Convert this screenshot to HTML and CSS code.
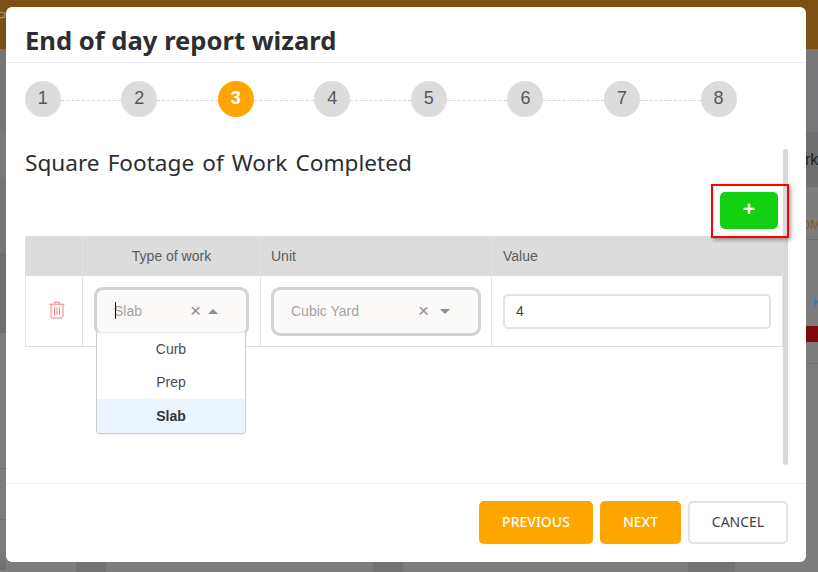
FILE: index.html
```html
<!DOCTYPE html>
<html lang="en">
<head>
<meta charset="utf-8">
<title>End of day report wizard</title>
<link rel="stylesheet" href="styles.css">
</head>
<body>
<div class="backdrop">
  <div class="bg-top"><span class="bg-p">P</span></div>
  <div class="bg-main">
    <div class="strip">
      <div class="band h84 tone-a"></div>
      <div class="band h45 tone-b"></div>
      <div class="band h75 tone-a"></div>
      <div class="band h80 tone-c"></div>
      <div class="band h136 tone-d line"></div>
      <div class="band h51 tone-d line"></div>
      <div class="band h52 tone-e"></div>
    </div>
    <div class="strip wide">
      <div class="band h83 tone-a"></div>
      <div class="band h55 tone-c rk-band"><span class="bg-rk">rk</span></div>
      <div class="band h53 tone-d line om-band"><span class="bg-om">OM</span></div>
      <div class="band h86 tone-d k-band"><span class="bg-k">K</span></div>
      <div class="band h16 tone-red"></div>
      <div class="band h22 tone-d line"></div>
      <div class="band h208 tone-d"></div>
    </div>
  </div>
  <div class="bg-foot bg-foot-a"></div>
  <div class="bg-foot bg-foot-b"></div>
  <div class="bg-foot bg-foot-c"></div>
</div>
<main class="modal">
  <header class="modal-head"><h1 class="modal-title">End of day report wizard</h1></header>
  <ol class="steps">
    <li class="step">1</li><li class="link"></li>
    <li class="step">2</li><li class="link"></li>
    <li class="step active">3</li><li class="link"></li>
    <li class="step">4</li><li class="link"></li>
    <li class="step">5</li><li class="link"></li>
    <li class="step">6</li><li class="link"></li>
    <li class="step">7</li><li class="link"></li>
    <li class="step">8</li>
  </ol>
  <section class="body">
    <div class="scrollbar"></div>
    <h2 class="section-title">Square Footage of Work Completed</h2>
    <div class="add-row">
      <div class="add-outline"><button class="add-btn" type="button">+</button></div>
    </div>
    <div class="table">
      <div class="row head">
        <div class="cell c-del"></div>
        <div class="cell c-type center">Type of work</div>
        <div class="cell c-unit">Unit</div>
        <div class="cell c-val">Value</div>
      </div>
      <div class="row data">
        <div class="cell c-del center">
          <svg class="trash" width="16" height="18" viewBox="0 0 16 18" fill="none" stroke="#fb7f85" stroke-width="1">
            <path d="M5.5 3V1.2h5V3"/>
            <path d="M.5 3.2h15"/>
            <path d="M2 3.2V15.5a1.5 1.5 0 0 0 1.5 1.5h9a1.5 1.5 0 0 0 1.5-1.5V3.2"/>
            <path d="M5.5 6.5v7.5M8 6.5v7.5M10.5 6.5v7.5"/>
          </svg>
        </div>
        <div class="cell c-type">
          <div class="select-wrap">
            <div class="select open">
              <span class="select-value"><span class="caret"></span>Slab</span>
              <span class="clear">×</span>
              <span class="arrow up"></span>
            </div>
            <ul class="menu">
              <li class="opt">Curb</li>
              <li class="opt">Prep</li>
              <li class="opt chosen">Slab</li>
            </ul>
          </div>
        </div>
        <div class="cell c-unit">
          <div class="select">
            <span class="select-value">Cubic Yard</span>
            <span class="clear">×</span>
            <span class="arrow down"></span>
          </div>
        </div>
        <div class="cell c-val"><div class="value-box">4</div></div>
      </div>
    </div>
  </section>
  <footer class="modal-foot">
    <button class="btn primary prev" type="button">PREVIOUS</button>
    <button class="btn primary next" type="button">NEXT</button>
    <button class="btn ghost" type="button">CANCEL</button>
  </footer>
</main>
</body>
</html>
```
FILE: styles.css
```css
* { box-sizing: border-box; }
html, body { margin: 0; padding: 0; }
body {
  width: 818px; height: 572px; overflow: hidden; position: relative;
  background: #7d7d7d; font-family: "Liberation Sans", Arial, sans-serif;
}
.backdrop { position: absolute; inset: 0; overflow: hidden; display: flex; flex-direction: column; }
.bg-top { position: relative; flex: none; height: 49px; background: #7c5012; color: #a6916f; font-size: 14px; overflow: hidden; }
.bg-p { position: absolute; left: -3px; top: 9px; }
.bg-main { flex: 1; display: flex; justify-content: space-between; }
.strip { width: 6px; display: flex; flex-direction: column; }
.strip.wide { width: 12px; }
.band { flex: none; position: relative; }
.h16 { height: 16px; } .h22 { height: 22px; } .h45 { height: 45px; } .h51 { height: 51px; }
.h52 { height: 52px; } .h53 { height: 53px; } .h55 { height: 55px; } .h75 { height: 75px; }
.h80 { height: 80px; } .h83 { height: 83px; } .h84 { height: 84px; } .h86 { height: 86px; }
.h136 { height: 136px; } .h208 { height: 208px; }
.tone-a { background: #767679; }
.tone-b { background: #7a7a78; }
.tone-c { background: #6e6f71; }
.tone-d { background: #7d7d7d; }
.tone-e { background: linear-gradient(#7d7d7d 60%, #6c6c6c 95%, #7d7d7d 96%); }
.tone-red { background: #800a0a; }
.line { border-bottom: 1px solid #6f6f6f; }
.bg-rk { position: absolute; left: -1px; top: 19px; font-size: 16px; line-height: 18px; color: #1c1f24; }
.bg-om { position: absolute; left: -6px; top: 30px; font-size: 13px; line-height: 15px; color: #86592a; }
.bg-k { position: absolute; left: 7px; top: 55px; font-size: 13px; line-height: 15px; color: #3b7ba8; }
.bg-foot { position: absolute; top: 562px; height: 10px; background: #737373; }
.bg-foot-a { left: 76px; width: 30px; }
.bg-foot-b { left: 373px; width: 30px; }
.bg-foot-c { left: 688px; width: 47px; }

.modal {
  position: absolute; left: 6px; top: 7px; width: 800px; height: 555px;
  background: #fff; border-radius: 6px; display: flex; flex-direction: column;
}
.modal-head { height: 56px; padding: 17px 19px 0; border-bottom: 1px solid #ecedf3; }
.modal-title {
  margin: 0; font-family: "Noto Sans", sans-serif; font-weight: 700; font-size: 25.6px;
  line-height: 34px; color: #2c2e30;
}
.steps {
  list-style: none; margin: 0; padding: 0 0 0 18.7px; display: flex; align-items: center; height: 72px;
}
.step {
  width: 36px; height: 36px; flex: none; border-radius: 50%; background: #dcdcdc; color: #55585b;
  font-size: 18px; padding-bottom: 1px; display: flex; align-items: center; justify-content: center;
}
.step.active { background: #ffa500; color: #fff; font-weight: 700; }
.link { width: 60.55px; flex: none; border-top: 1px dashed #d9d9d9; margin-top: 2px; }

.body { position: relative; flex: 1; padding: 14px 0 0 19px; }
.scrollbar { position: absolute; left: 777px; top: 14px; width: 5px; height: 316px; background: #d8d8d8; border-radius: 3px; }
.section-title {
  margin: 0; font-family: "Noto Sans", sans-serif; font-weight: 400; font-size: 22.6px;
  word-spacing: 2.2px; line-height: 28px; color: #2c2e30;
}
.add-row { display: flex; justify-content: flex-end; padding: 7px 0 0 0; height: 59px; width: 764px; position: relative; z-index: 1; }
.add-outline {
  width: 78px; height: 54px; border: 2px solid #f00; padding: 6px 0 0 7px;
  box-shadow: 2px 2px 4px rgba(0,0,0,.35); flex: none;
}
.add-btn {
  display: block; width: 58px; height: 37px; padding: 0 0 3px; border: 0; border-radius: 5px; background: #13d013; color: #fff;
  font: 700 21px/34px "Liberation Sans", sans-serif;
}
.table { width: 758px; border-bottom: 1px solid #dfe1e8; border-left: 1px solid #dfe1e8; }
.row { display: flex; }
.head { height: 40px; background: #dcdcdc; color: #595c5f; font-size: 14px; }
.data { height: 70px; }
.cell { flex: none; border-right: 1px solid #e3e4ea; padding: 0 10px; display: flex; align-items: center; }
.head .cell { border-right-color: #e2e2e6; }
.center { justify-content: center; }
.c-del { width: 57px; padding: 0; }
.c-type { width: 178px; padding: 0 11px; }
.head .c-type { padding: 0; }
.c-unit { width: 231px; }
.c-val { width: 291px; padding: 0 11px; }
.trash { display: block; margin: -3px 0 0 6px; }
.select-wrap { position: relative; width: 100%; }
.select {
  width: 100%; height: 49px; border: 3px solid #d3d3d3; border-radius: 9px; background: #fbfaf9;
  display: flex; align-items: center; padding: 0 28px 0 17px; color: #a3a3a3; font-size: 14px;
}
.select-value { flex: 1; position: relative; }
.caret { position: absolute; left: 1px; top: -1px; width: 1px; height: 17px; background: #111; }
.clear { font-size: 19px; line-height: 16px; color: #8f8f8f; margin-right: 11px; }
.open .clear { margin-right: 7px; }
.arrow { width: 0; height: 0; border-left: 5px solid transparent; border-right: 5px solid transparent; }
.arrow.up { border-bottom: 5px solid #8f8f8f; }
.arrow.down { border-top: 5px solid #8f8f8f; }
.menu {
  list-style: none; margin: 0; padding: 0; position: absolute; left: 2px; top: 45px; width: 150px;
  background: #fff; border: 1px solid #cccccc; border-top-color: #e6e6e6; border-radius: 0 0 4px 4px; color: #4a4c4f; font-size: 14px;
  box-shadow: 0 1px 1px rgba(0,0,0,.05); overflow: hidden;
}
.opt { height: 33px; display: flex; align-items: center; justify-content: center; }
.opt.chosen { height: 34px; background: #ebf5ff; font-weight: 700; color: #333; }
.value-box {
  width: 268px; height: 35px; border: 2px solid #dfe3ea; border-radius: 5px; color: #444;
  font-size: 14px; padding: 0 11px; display: flex; align-items: center;
}

.modal-foot {
  height: 79px; border-top: 1px solid #eceef1; display: flex; justify-content: flex-end; align-items: flex-start;
  padding: 17px 18px 0 0; gap: 7px;
}
.btn {
  height: 43px; border-radius: 5px; font-family: "Noto Sans", sans-serif; font-size: 14px; font-weight: 500; padding: 0 0 2px;
}
.primary { background: #ffa500; color: #fff; border: 0; }
.prev { width: 114px; }
.next { width: 81px; }
.ghost { width: 100px; background: #fff; color: #3e4246; border: 2px solid #dfe3ea; font-weight: 400; }
```
